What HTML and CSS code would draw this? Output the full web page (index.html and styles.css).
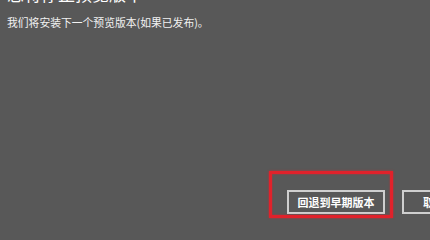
FILE: index.html
```html
<!DOCTYPE html>
<html lang="zh-CN">
<head>
<meta charset="utf-8">
<link rel="stylesheet" href="styles.css">
</head>
<body>
<div class="dialog">
  <div class="content">
    <h1 class="title">您将停止预览版本</h1>
    <p class="desc">我们将安装下一个预览版本(如果已发布)。</p>
  </div>
  <div class="footer">
    <button class="btn btn-rollback">回退到早期版本</button>
    <button class="btn btn-cancel">取消</button>
    <div class="highlight"></div>
  </div>
</div>
</body>
</html>
```
FILE: styles.css
```css
html, body {
  margin: 0;
  padding: 0;
  width: 430px;
  height: 220px;
  overflow: hidden;
  background: #585858;
}
.dialog {
  width: 430px;
  height: 220px;
  overflow: hidden;
  display: flex;
  flex-direction: column;
  justify-content: space-between;
  font-family: "Noto Sans CJK SC", "Noto Sans", sans-serif;
  color: #ffffff;
}
.content {
  padding-left: 7px;
}
.title {
  margin: -18px 0 0 0;
  font-size: 17px;
  font-weight: 400;
  line-height: 24px;
}
.desc {
  margin: 8px 0 0 0;
  font-size: 10.8px;
  line-height: 16px;
  color: #f2f2f2;
}
.footer {
  position: relative;
  display: flex;
  gap: 17px;
  padding-left: 287px;
  padding-bottom: 6px;
  white-space: nowrap;
}
.btn {
  flex: 0 0 auto;
  height: 24px;
  box-sizing: border-box;
  border: 2px solid #cfcfcf;
  background: transparent;
  color: #ffffff;
  font-family: "Noto Sans CJK SC", sans-serif;
  font-size: 11px;
  font-weight: 700;
  padding: 0;
  line-height: 20px;
  text-align: center;
}
.btn-rollback {
  width: 98px;
}
.btn-cancel {
  width: 64px;
}
.highlight {
  position: absolute;
  left: 269px;
  top: -19px;
  width: 124px;
  height: 47px;
  box-sizing: border-box;
  border: 3px solid #e0222b;
  box-shadow: 0 0 2px rgba(224, 34, 43, 0.8), inset 0 0 2px rgba(224, 34, 43, 0.8);
}
```
